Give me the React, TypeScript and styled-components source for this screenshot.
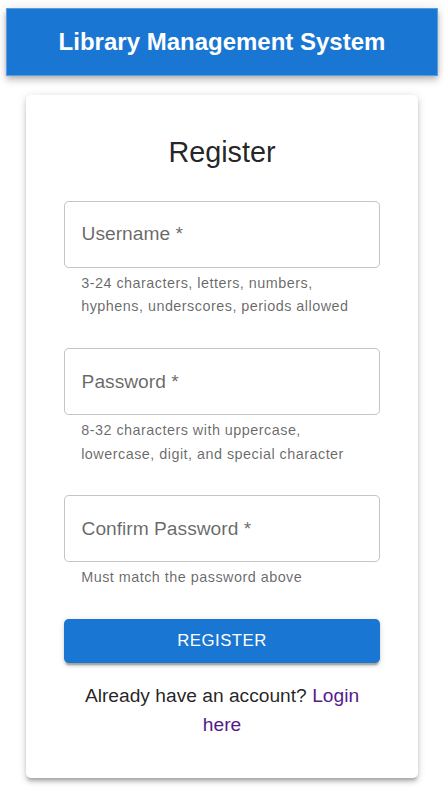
import React from "react";
import styled, { createGlobalStyle } from "styled-components";

const GlobalStyle = createGlobalStyle`
  html, body {
    margin: 0;
    padding: 0;
    background: #ffffff;
  }
  body {
    font-family: "Liberation Sans", Arial, Helvetica, sans-serif;
    color: rgba(0, 0, 0, 0.87);
  }
  * { box-sizing: border-box; }
`;

const Page = styled.div`
  padding: 8px 6px 18px 6px;
`;

const Header = styled.header`
  height: 67.5px;
  display: flex;
  align-items: center;
  justify-content: center;
  background: #1976d2;
  border: 1px solid #5b9be0;
  color: #ffffff;
  font-size: 24px;
  font-weight: 700;
  box-shadow: 0 2.4px 4.8px -1.2px rgba(0, 0, 0, 0.2),
    0 4.8px 6px 0 rgba(0, 0, 0, 0.14), 0 1.2px 12px 0 rgba(0, 0, 0, 0.12);
`;

const Card = styled.main`
  width: 392px;
  margin: 19.5px auto 0;
  padding: 38.4px;
  display: flex;
  flex-direction: column;
  background: #ffffff;
  border-radius: 5px;
  box-shadow: 0 3.6px 3.6px -2.4px rgba(0, 0, 0, 0.2),
    0 3.6px 4.8px 0 rgba(0, 0, 0, 0.14), 0 1.2px 9.6px 0 rgba(0, 0, 0, 0.12);
`;

const Title = styled.h2`
  margin: 0 0 10px;
  font-size: 28.8px;
  font-weight: 400;
  line-height: 38.4px;
  text-align: center;
  color: rgba(0, 0, 0, 0.87);
`;

const Form = styled.form`
  display: flex;
  flex-direction: column;
`;

const Field = styled.div`
  display: flex;
  flex-direction: column;
  margin: 19.2px 0 9.6px;
`;

const Input = styled.input`
  width: 100%;
  height: 67px;
  padding: 0 16.2px;
  border: 1px solid rgba(0, 0, 0, 0.23);
  border-radius: 4.8px;
  font-family: inherit;
  font-size: 19.2px;
  color: rgba(0, 0, 0, 0.87);
  background: transparent;
  outline: none;
  &::placeholder {
    color: rgba(0, 0, 0, 0.6);
    opacity: 1;
  }
`;

const Helper = styled.p`
  margin: 3.6px 16.8px 0;
  font-size: 14.4px;
  line-height: 23.9px;
  letter-spacing: 0.48px;
  color: rgba(0, 0, 0, 0.6);
`;

const SubmitButton = styled.button`
  width: 100%;
  height: 44px;
  margin-top: 19.4px;
  border: none;
  border-radius: 4.8px;
  background: #1976d2;
  color: #ffffff;
  font-family: inherit;
  font-size: 16.8px;
  letter-spacing: 0.48px;
  text-transform: uppercase;
  cursor: pointer;
  box-shadow: 0 3.6px 1.2px -2.4px rgba(0, 0, 0, 0.2),
    0 2.4px 2.4px 0 rgba(0, 0, 0, 0.14), 0 1.2px 6px 0 rgba(0, 0, 0, 0.12);
`;

const Footer = styled.p`
  margin: 19.4px 0 0;
  font-size: 19.2px;
  line-height: 28.8px;
  text-align: center;
  color: rgba(0, 0, 0, 0.87);
`;

const LoginLink = styled.a`
  color: #551a8b;
  text-decoration: none;
`;

const fields = [
  {
    placeholder: "Username *",
    type: "text",
    helper: "3-24 characters, letters, numbers, hyphens, underscores, periods allowed",
  },
  {
    placeholder: "Password *",
    type: "password",
    helper: "8-32 characters with uppercase, lowercase, digit, and special character",
  },
  {
    placeholder: "Confirm Password *",
    type: "password",
    helper: "Must match the password above",
  },
];

export default function App() {
  return (
    <>
      <GlobalStyle />
      <Page>
        <Header>Library Management System</Header>
        <Card>
          <Title>Register</Title>
          <Form onSubmit={(e) => e.preventDefault()}>
            {fields.map((f) => (
              <Field key={f.placeholder}>
                <Input type={f.type} placeholder={f.placeholder} />
                <Helper>{f.helper}</Helper>
              </Field>
            ))}
            <SubmitButton type="submit">Register</SubmitButton>
          </Form>
          <Footer>
            Already have an account? <LoginLink href="#">Login here</LoginLink>
          </Footer>
        </Card>
      </Page>
    </>
  );
}
